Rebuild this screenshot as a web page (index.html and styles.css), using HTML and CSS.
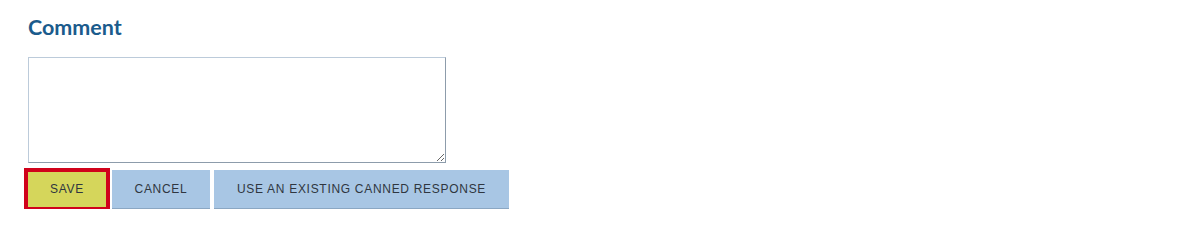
FILE: index.html
```html
<!DOCTYPE html>
<html lang="en">
<head>
<meta charset="utf-8">
<title>Comment</title>
<link rel="stylesheet" href="styles.css">
</head>
<body>
<div class="comment-panel">
  <h2 class="comment-title">Comment</h2>
  <textarea class="comment-input" aria-label="Comment"></textarea>
  <div class="actions">
    <button class="btn btn-save" type="button">Save</button>
    <button class="btn btn-secondary" type="button">Cancel</button>
    <button class="btn btn-secondary btn-wide" type="button">Use an existing canned response</button>
  </div>
</div>
</body>
</html>
```

FILE: styles.css
```css
html, body {
  margin: 0;
  padding: 0;
  background: #ffffff;
}

.comment-panel {
  padding: 0 0 0 26px;
  display: flex;
  flex-direction: column;
  align-items: flex-start;
}

.comment-title {
  margin: 14px 0 0 2px;
  font-family: Lato, "Open Sans", sans-serif;
  font-weight: 700;
  font-size: 21.5px;
  line-height: 26px;
  color: #1b5b8c;
}

.comment-input {
  margin: 17px 0 0 2px;
  box-sizing: border-box;
  width: 418px;
  height: 106px;
  border: 1px solid;
  border-color: #bccbda #8d9cab #8d9cab #bccbda;
  padding: 2px;
  font-family: "Liberation Sans", Arial, sans-serif;
  font-size: 13px;
  background: #fff;
  resize: both;
}

.actions {
  display: flex;
  gap: 4px;
  margin-top: 7px;
}

.btn {
  box-sizing: border-box;
  height: 39px;
  border: 0;
  border-bottom: 1px solid #8ba7c3;
  border-radius: 0;
  padding: 0;
  font-family: "Liberation Sans", Arial, sans-serif;
  font-size: 12px;
  letter-spacing: 0.7px;
  text-transform: uppercase;
  color: #2f3640;
  background: #a8c6e4;
  cursor: pointer;
}

.btn-save {
  width: 82px;
  background: #d5d65b;
  border-bottom-color: #d5d65b;
  outline: 4px solid #d0021b;
  outline-offset: -2px;
}

.btn-secondary {
  width: 98px;
}

.btn-wide {
  width: 295px;
}
```
